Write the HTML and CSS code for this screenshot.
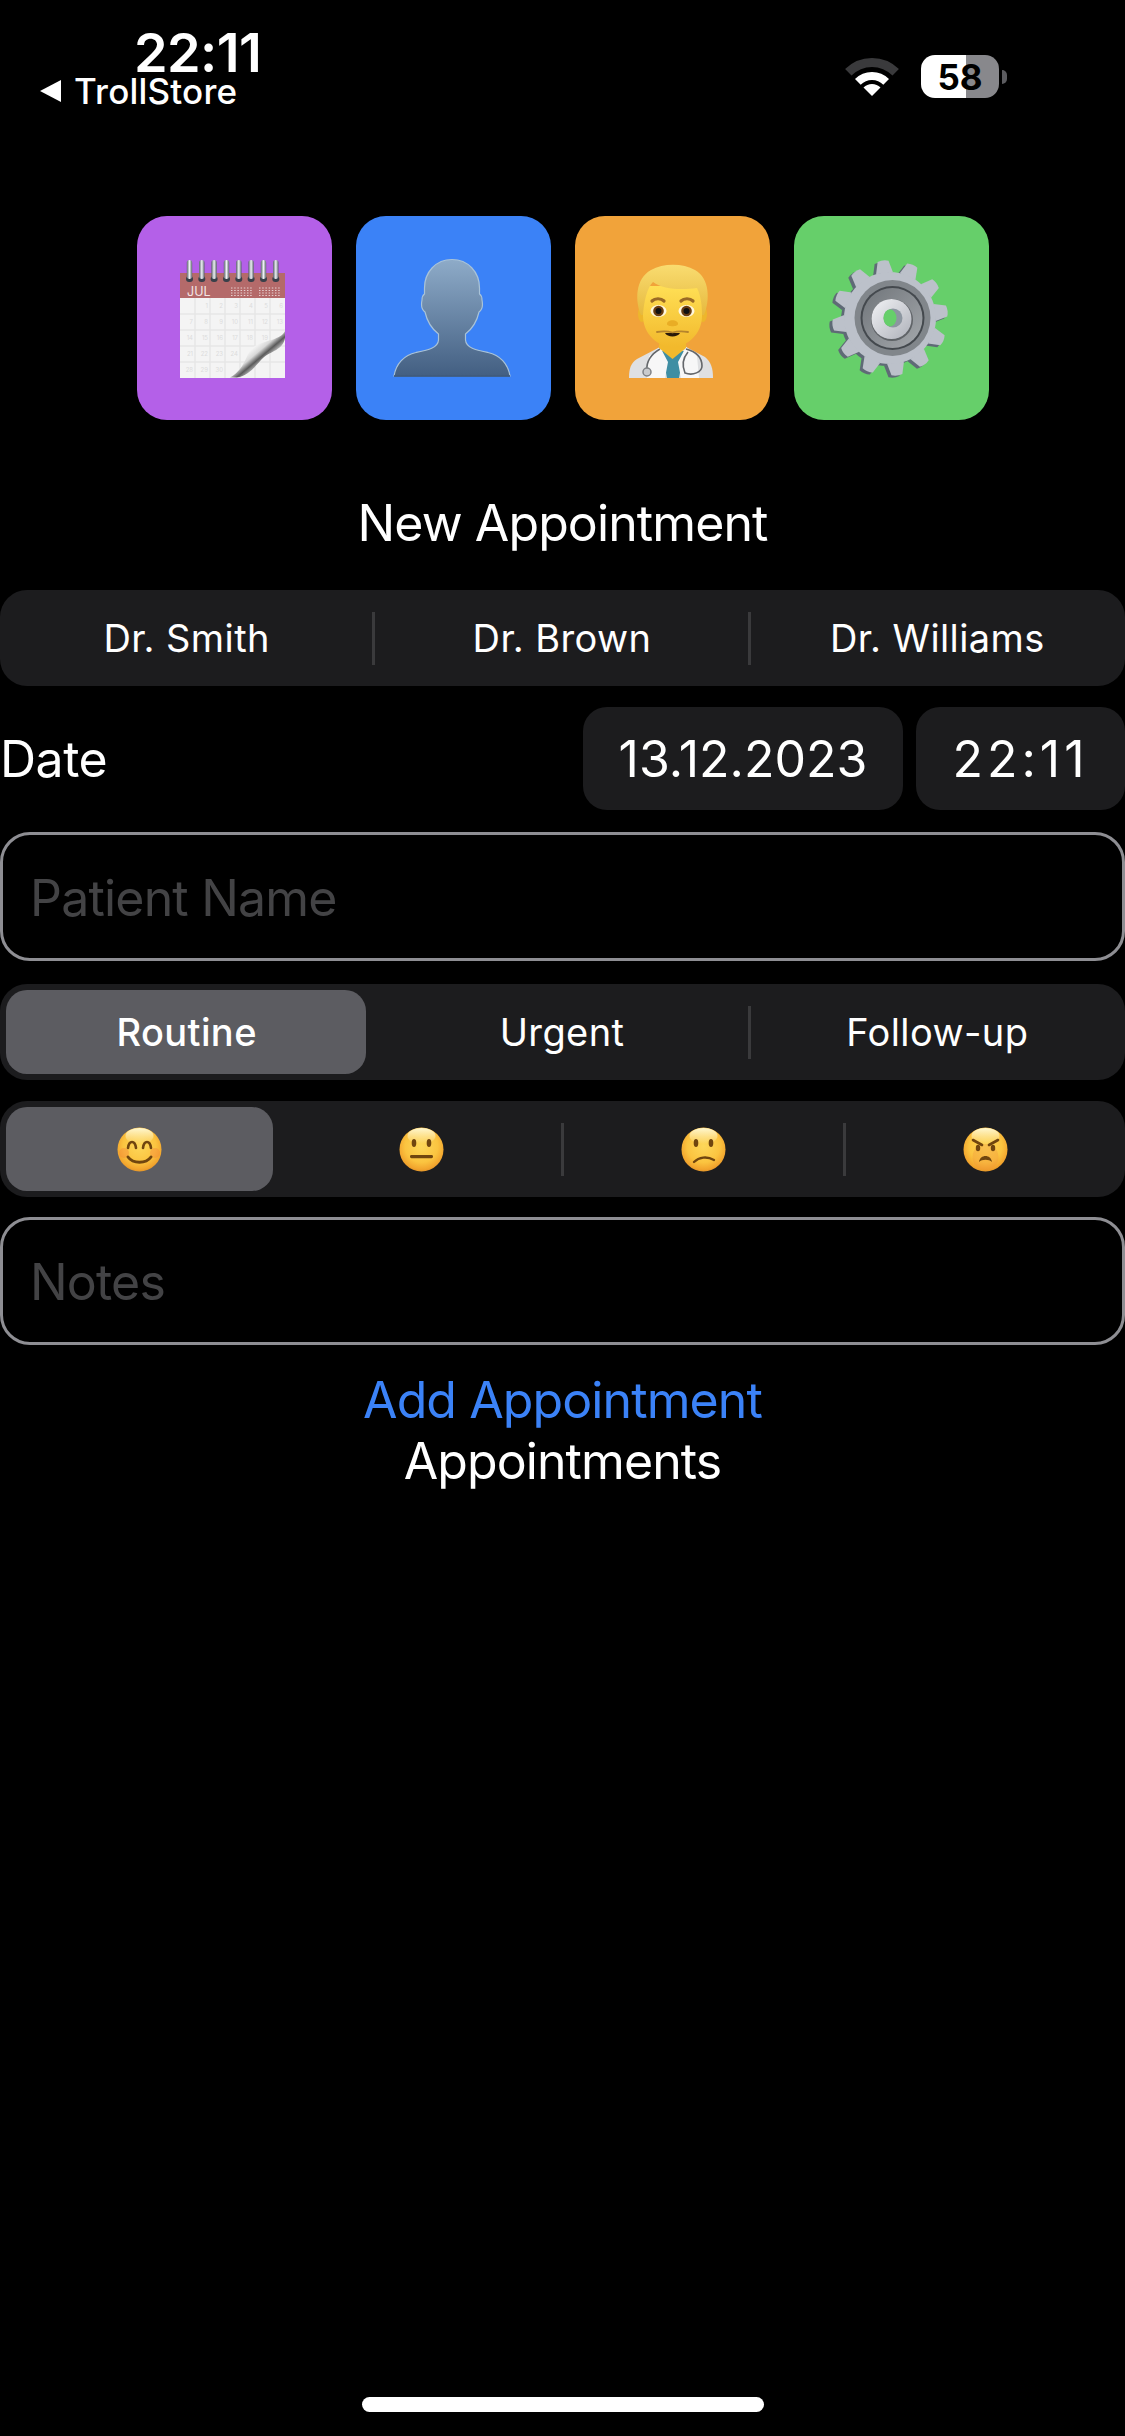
FILE: index.html
```html
<!DOCTYPE html>
<html lang="en">
<head>
  <meta charset="UTF-8" />
  <title>New Appointment</title>
  <meta name="viewport" content="width=device-width, initial-scale=1.0" />
  <link rel="stylesheet" href="styles.css">
</head>
<body>
  <svg class="defs" width="0" height="0">
    <defs>
      <radialGradient id="faceGrad" cx="0.5" cy="0.42" r="0.62">
        <stop offset="0" stop-color="#fdd75a" />
        <stop offset="0.6" stop-color="#fbc440" />
        <stop offset="0.85" stop-color="#f2a52e" />
        <stop offset="1" stop-color="#d98a25" />
      </radialGradient>
      <linearGradient id="faceShine" x1="0" y1="0" x2="0" y2="1">
        <stop offset="0" stop-color="#fffbd8" stop-opacity=".95" />
        <stop offset="1" stop-color="#fffbd8" stop-opacity="0" />
      </linearGradient>
      <linearGradient id="personGrad" x1="0" y1="0" x2="0" y2="1">
        <stop offset="0" stop-color="#8eabc8" />
        <stop offset="1" stop-color="#435f82" />
      </linearGradient>
      <linearGradient id="curlGrad" x1="0" y1="0" x2="1" y2="1">
        <stop offset="0.38" stop-color="#f8f8f8" />
        <stop offset="0.48" stop-color="#d8d8d8" />
        <stop offset="0.56" stop-color="#5a5a5a" />
        <stop offset="0.62" stop-color="#aaaaaa" />
      </linearGradient>
      <linearGradient id="ringGrad" x1="0" y1="0" x2="1" y2="0">
        <stop offset="0" stop-color="#59616b" />
        <stop offset="0.5" stop-color="#eef1f4" />
        <stop offset="1" stop-color="#59616b" />
      </linearGradient>
      <linearGradient id="hairGrad" x1="0" y1="0" x2="0" y2="1">
        <stop offset="0" stop-color="#f9dc70" />
        <stop offset="1" stop-color="#e6b93e" />
      </linearGradient>
      <linearGradient id="skinGrad" x1="0" y1="0" x2="0" y2="1">
        <stop offset="0" stop-color="#ffdf55" />
        <stop offset="1" stop-color="#f2b92c" />
      </linearGradient>
      <linearGradient id="hubGrad" x1="0" y1="0" x2="1" y2="1">
        <stop offset="0" stop-color="#f2f3f6" />
        <stop offset="1" stop-color="#aeb1b9" />
      </linearGradient>
      <linearGradient id="dishGrad" x1="0" y1="0" x2="1" y2="1">
        <stop offset="0" stop-color="#70757a" />
        <stop offset="1" stop-color="#a4a8ac" />
      </linearGradient>
      <g id="gearTeeth">
        <path id="tooth" d="M141 93.500L153 96.500Q155 102 153 107.500L141 110.500Z" transform="rotate(-7 96 102)" />
        <use href="#tooth" transform="rotate(30 96 102)" />
        <use href="#tooth" transform="rotate(60 96 102)" />
        <use href="#tooth" transform="rotate(90 96 102)" />
        <use href="#tooth" transform="rotate(120 96 102)" />
        <use href="#tooth" transform="rotate(150 96 102)" />
        <use href="#tooth" transform="rotate(180 96 102)" />
        <use href="#tooth" transform="rotate(210 96 102)" />
        <use href="#tooth" transform="rotate(240 96 102)" />
        <use href="#tooth" transform="rotate(270 96 102)" />
        <use href="#tooth" transform="rotate(300 96 102)" />
        <use href="#tooth" transform="rotate(330 96 102)" />
        <circle cx="96" cy="102" r="46" />
      </g>
    </defs>
  </svg>

  <div class="page">
    <div class="status">
      <div class="status-left">
        <div class="clock">22:11</div>
        <div class="back-app"><span class="back-arrow"></span>TrollStore</div>
      </div>
      <div class="status-right">
        <svg class="wifi" viewBox="0 0 52 39" width="52" height="39">
          <path fill="#3a3a3c" d="M26 1A38 38 0 0 1 52.900 12.100L46.500 18.500A29 29 0 0 0 5.500 18.500L-.9 12.100A38 38 0 0 1 26 1Z" />
          <path fill="#fff" d="M26 15A24 24 0 0 1 43 22L37.300 27.700A16 16 0 0 0 14.700 27.700L9 22A24 24 0 0 1 26 15Z" />
          <path fill="#fff" d="M26 39L17.500 30.500A12 12 0 0 1 34.500 30.500Z" />
        </svg>
        <div class="battery"><span class="battery-level">58</span></div>
        <div class="battery-nub"></div>
      </div>
    </div>

    <div class="tiles">
      <div class="tile tile-purple">
        <svg viewBox="0 0 195 204" width="195" height="204">
          <rect x="43" y="57" width="105" height="25" fill="#b46a6a" />
          <text x="50" y="80" class="cal-month">JUL</text>
          <path fill="none" stroke="#e6cfcf" stroke-width="1" stroke-dasharray="1.500 1.700" d="M94 72H116M94 74.500H116M94 77H116M94 79.500H116M122 72H144M122 74.500H144M122 77H144M122 79.500H144" />
          <rect x="43" y="82" width="105" height="80" fill="#f4f4f4" />
          <g stroke="#e6e6e6" stroke-width="1.500">
            <path d="M58 82V162M73 82V162M88 82V162M103 82V162M118 82V162M133 82V162" />
            <path d="M43 98H148M43 114H148M43 130H148M43 146H148" />
          </g>
          <g class="cal-days">
            <text x="71" y="92">1</text><text x="86" y="92">2</text><text x="101" y="92">3</text><text x="116" y="92">4</text><text x="131" y="92">5</text><text x="146" y="92">6</text>
            <text x="56" y="108">7</text><text x="71" y="108">8</text><text x="86" y="108">9</text><text x="101" y="108">10</text><text x="116" y="108">11</text><text x="131" y="108">12</text><text x="146" y="108">13</text>
            <text x="56" y="124">14</text><text x="71" y="124">15</text><text x="86" y="124">16</text><text x="101" y="124">17</text><text x="116" y="124">18</text><text x="131" y="124">19</text>
            <text x="56" y="140">21</text><text x="71" y="140">22</text><text x="86" y="140">23</text><text x="101" y="140">24</text>
            <text x="56" y="156">28</text><text x="71" y="156">29</text><text x="86" y="156">30</text>
          </g>
          <path fill="url(#curlGrad)" d="M148 115C144 124 128 124 118 130C108 136 110 152 93 161.500L100 161.500C112 160 120 148 126 142C134 135 146 134 148 122Z" />
          <g fill="#39404a">
            <rect x="49" y="60" width="7" height="6" rx="3" />
            <rect x="61.300" y="60" width="7" height="6" rx="3" />
            <rect x="73.600" y="60" width="7" height="6" rx="3" />
            <rect x="86" y="60" width="7" height="6" rx="3" />
            <rect x="98.300" y="60" width="7" height="6" rx="3" />
            <rect x="110.600" y="60" width="7" height="6" rx="3" />
            <rect x="123" y="60" width="7" height="6" rx="3" />
            <rect x="135.300" y="60" width="7" height="6" rx="3" />
          </g>
          <g fill="url(#ringGrad)">
            <rect x="49.800" y="44" width="5.400" height="19" rx="2.700" />
            <rect x="62.100" y="44" width="5.400" height="19" rx="2.700" />
            <rect x="74.400" y="44" width="5.400" height="19" rx="2.700" />
            <rect x="86.800" y="44" width="5.400" height="19" rx="2.700" />
            <rect x="99.100" y="44" width="5.400" height="19" rx="2.700" />
            <rect x="111.400" y="44" width="5.400" height="19" rx="2.700" />
            <rect x="123.800" y="44" width="5.400" height="19" rx="2.700" />
            <rect x="136.100" y="44" width="5.400" height="19" rx="2.700" />
          </g>
        </svg>
      </div>

      <div class="tile tile-blue">
        <svg viewBox="0 0 195 204" width="195" height="204">
          <path fill="url(#personGrad)" stroke="#a9c3d8" stroke-width="1.200" d="M38 160C40 148 48 139 60 136.500C72 134 82 132 82.500 124L82.500 118C76 113 71 105 69 96C66 94 65 89 66 84C66 81 67 79 68.500 78L68.500 72C68.500 56 80 43.500 96 43.500C112 43.500 123.500 56 123.500 72L123.500 78C125 79 126 81 126 84C127 89 126 94 123 96C121 105 116 113 109.500 118L109.500 124C110 132 120 134 132 136.500C144 139 152 148 154 160Z" />
          <path fill="none" stroke="#2f4a6c" stroke-width="1.500" d="M38 160H154" />
        </svg>
      </div>

      <div class="tile tile-orange">
        <svg viewBox="0 0 195 204" width="195" height="204">
          <path fill="#dfe0e2" d="M54 162C54 152 56 147 62 143L85 131H111L130 141C136 146 138 152 138 162Z" />
          <path fill="#3f8ea3" d="M87 135H109L104 162H92Z" />
          <path fill="#f7f7f7" d="M85 131L93 146L90 162H72L74 140Z" />
          <path fill="#f7f7f7" d="M111 131L103 146L106 162H124L122 140Z" />
          <path fill="none" stroke="#64676b" stroke-width="1.600" d="M85 133C76 138 71 146 72 154M111 133C122 136 127 142 127 150C127 156 118 160 110 157C107 150 108 142 113 136" />
          <circle cx="72" cy="156" r="4" fill="#c9cbce" stroke="#7e8185" stroke-width="1.500" />
          <path fill="#f2b92c" d="M84 122H111V132L97.500 143L84 132Z" />
          <ellipse cx="67" cy="98" rx="4" ry="8" fill="#edb62c" />
          <ellipse cx="128" cy="98" rx="4" ry="8" fill="#edb62c" />
          <path fill="url(#skinGrad)" d="M68 70H127V100C127 118 112 131 97.500 131C83 131 68 118 68 100Z" />
          <path fill="url(#hairGrad)" d="M66 99C60 85 60 63 76 54C88 47 108 47 120 54C135 62 135 85 129 99L127 99C127 90 126 80 122 72C108 74 88 74 78 66C72 72 69 85 68 99Z" />
          <path fill="none" stroke="#9a6a25" stroke-width="3.200" stroke-linecap="round" d="M77 85C80 82 86 82 89 85M106 85C109 82 115 82 118 85" />
          <ellipse cx="83.500" cy="95" rx="8" ry="6" fill="#fff6dc" />
          <ellipse cx="111.500" cy="95" rx="8" ry="6" fill="#fff6dc" />
          <circle cx="83.500" cy="95" r="5.300" fill="#6a3d12" />
          <circle cx="111.500" cy="95" r="5.300" fill="#6a3d12" />
          <circle cx="83.500" cy="95" r="3" fill="#111" />
          <circle cx="111.500" cy="95" r="3" fill="#111" />
          <path fill="#e9ad25" d="M92 108C92 103 103 103 103 108C103 111 92 111 92 108Z" />
          <path fill="#2a1a0a" d="M90 117H105C103 121.500 92 121.500 90 117Z" />
          <path fill="none" stroke="#b5842c" stroke-width="1.800" stroke-linecap="round" d="M82 116C88 115 92 115 97.500 116.500C103 115 107 115 113 116" />
        </svg>
      </div>

      <div class="tile tile-green">
        <svg viewBox="0 0 195 204" width="195" height="204">
          <use href="#gearTeeth" fill="#5f6a76" transform="translate(-3 2)" />
          <use href="#gearTeeth" fill="#bcc1ca" />
          <circle cx="98.500" cy="102" r="38" fill="#81868b" />
          <circle cx="98.500" cy="102" r="32" fill="#44494e" />
          <circle cx="98.500" cy="102" r="30" fill="url(#dishGrad)" />
          <circle cx="98" cy="104" r="21" fill="#5f6367" />
          <circle cx="97.500" cy="103" r="20" fill="url(#hubGrad)" />
          <circle cx="99" cy="102" r="9.500" fill="#8c96a0" />
          <ellipse cx="96" cy="102" rx="6.500" ry="8.500" fill="#66cf6a" />
        </svg>
      </div>
    </div>

    <h2 class="title">New Appointment</h2>

    <div class="seg seg-doctors">
      <div class="seg-item"><span class="seg-label">Dr. Smith</span></div>
      <div class="seg-sep"></div>
      <div class="seg-item"><span class="seg-label">Dr. Brown</span></div>
      <div class="seg-sep"></div>
      <div class="seg-item"><span class="seg-label">Dr. Williams</span></div>
    </div>

    <div class="date-row">
      <div class="date-label">Date</div>
      <div class="pill pill-date">13.12.2023</div>
      <div class="pill pill-time">22:11</div>
    </div>

    <div class="field field-name">Patient Name</div>

    <div class="seg seg-type">
      <div class="seg-item"><span class="seg-label selected">Routine</span></div>
      <div class="seg-sep off"></div>
      <div class="seg-item"><span class="seg-label">Urgent</span></div>
      <div class="seg-sep"></div>
      <div class="seg-item"><span class="seg-label">Follow-up</span></div>
    </div>

    <div class="seg seg-mood">
      <div class="seg-item"><span class="seg-label selected">
        <svg class="emoji" viewBox="0 0 45 45" width="45" height="45">
          <circle cx="22.500" cy="22.500" r="22" fill="url(#faceGrad)" />
          <ellipse cx="22.500" cy="9" rx="14" ry="8" fill="url(#faceShine)" />
          <circle cx="7" cy="26" r="5" fill="#f58a3c" opacity=".45" />
          <circle cx="38" cy="26" r="5" fill="#f58a3c" opacity=".45" />
          <path fill="none" stroke="#70450f" stroke-width="2.600" stroke-linecap="round" d="M11 21C12 13 18 13 19 21M26 21C27 13 33 13 34 21" />
          <path fill="none" stroke="#70450f" stroke-width="3" stroke-linecap="round" d="M11 30C16 37 29 37 34 30" />
        </svg>
      </span></div>
      <div class="seg-sep off"></div>
      <div class="seg-item"><span class="seg-label">
        <svg class="emoji" viewBox="0 0 45 45" width="45" height="45">
          <circle cx="22.500" cy="22.500" r="22" fill="url(#faceGrad)" />
          <ellipse cx="22.500" cy="9" rx="14" ry="8" fill="url(#faceShine)" />
          <ellipse cx="15" cy="16" rx="2.300" ry="4" fill="#70450f" />
          <ellipse cx="30" cy="16" rx="2.300" ry="4" fill="#70450f" />
          <rect x="11" y="28" width="23" height="3.200" rx="1.400" fill="#70450f" />
        </svg>
      </span></div>
      <div class="seg-sep"></div>
      <div class="seg-item"><span class="seg-label">
        <svg class="emoji" viewBox="0 0 45 45" width="45" height="45">
          <circle cx="22.500" cy="22.500" r="22" fill="url(#faceGrad)" />
          <ellipse cx="22.500" cy="9" rx="14" ry="8" fill="url(#faceShine)" />
          <ellipse cx="15" cy="16" rx="2.300" ry="4" fill="#70450f" />
          <ellipse cx="30" cy="16" rx="2.300" ry="4" fill="#70450f" />
          <path fill="none" stroke="#70450f" stroke-width="2.400" stroke-linecap="round" d="M13 35C18 30 26 29 33 33" />
        </svg>
      </span></div>
      <div class="seg-sep"></div>
      <div class="seg-item"><span class="seg-label">
        <svg class="emoji" viewBox="0 0 45 45" width="45" height="45">
          <circle cx="22.500" cy="22.500" r="22" fill="url(#faceGrad)" />
          <ellipse cx="22.500" cy="9" rx="14" ry="8" fill="url(#faceShine)" />
          <circle cx="22.500" cy="30" r="13" fill="#ef8f3a" opacity=".3" />
          <path fill="none" stroke="#70450f" stroke-width="2.600" stroke-linecap="round" d="M10 13L19 18M35 13L26 18" />
          <ellipse cx="15" cy="21" rx="2.200" ry="3.200" fill="#70450f" />
          <ellipse cx="30" cy="21" rx="2.200" ry="3.200" fill="#70450f" />
          <path fill="#70450f" d="M16 35C17 27 28 27 29 35C26 32 19 32 16 35Z" />
        </svg>
      </span></div>
    </div>

    <div class="field field-notes">Notes</div>

    <div class="add-link">Add Appointment</div>
    <div class="list-title">Appointments</div>

    <div class="home-bar"></div>
  </div>
</body>
</html>
```

FILE: styles.css
```css
* {
  box-sizing: border-box;
}

body {
  margin: 0;
  background-color: #000;
  color: #fff;
  font-family: Inter, "Noto Sans", sans-serif;
}

.defs {
  position: absolute;
}

.page {
  display: flex;
  flex-direction: column;
  height: 2436px;
  width: 1125px;
  overflow: hidden;
}

/* status bar */
.status {
  display: flex;
  justify-content: space-between;
  height: 216px;
  padding-right: 118px;
}

.status-left {
  padding-top: 31px;
}

.clock {
  margin-left: 134px;
  font-size: 54px;
  line-height: 44px;
  font-weight: 600;
  letter-spacing: -0.6px;
}

.back-app {
  display: flex;
  align-items: center;
  margin-left: 40px;
  margin-top: 1px;
  font-size: 35px;
  line-height: 30px;
  font-weight: 500;
  letter-spacing: 0.2px;
}

.back-arrow {
  width: 0;
  height: 0;
  margin-right: 13px;
  border-top: 11px solid transparent;
  border-bottom: 11px solid transparent;
  border-right: 21px solid #fff;
}

.status-right {
  display: flex;
  align-items: flex-start;
  padding-top: 55px;
}

.wifi {
  margin-top: 2px;
  margin-right: 23px;
  overflow: visible;
}

.battery {
  display: flex;
  align-items: center;
  justify-content: center;
  width: 78px;
  height: 43px;
  border-radius: 14px;
  background: linear-gradient(to right, #fff 45px, #88888c 45px);
  color: #000;
}

.battery-level {
  font-size: 35px;
  font-weight: 700;
}

.battery-nub {
  width: 5px;
  height: 14px;
  margin-top: 15px;
  margin-left: 3px;
  border-radius: 0 7px 7px 0;
  background-color: #5c5c60;
}

/* top tiles */
.tiles {
  display: flex;
  justify-content: center;
  gap: 24px;
  padding-left: 1px;
}

.tile {
  width: 195px;
  height: 204px;
  border-radius: 30px;
}

.tile svg {
  display: block;
}

.tile-purple {
  background-color: #b460e8;
}

.tile-blue {
  background-color: #3b82f7;
}

.tile-orange {
  background-color: #f1a33a;
}

.tile-green {
  background-color: #66cf6a;
}

.cal-month {
  font-size: 12.500px;
  fill: #f3e4e4;
}

.cal-days text {
  font-size: 6px;
  fill: #dcdcdc;
  text-anchor: end;
}

.title {
  margin: 72px 0 35px;
  font-size: 50px;
  line-height: 63px;
  font-weight: 400;
  text-align: center;
  letter-spacing: -0.9px;
}

/* segmented controls */
.seg {
  display: flex;
  align-items: center;
  height: 96px;
  border-radius: 27px;
  background-color: #1c1c1e;
}

.seg-doctors,
.seg-type {
  padding-right: 2px;
}

.seg-item {
  flex: 1 1 0;
  display: flex;
  height: 100%;
  padding: 6px;
}

.seg-label {
  flex: 1;
  display: flex;
  align-items: center;
  justify-content: center;
  border-radius: 21px;
  font-size: 38px;
  letter-spacing: 0.4px;
}

.seg-doctors .seg-label,
.seg-type .seg-label {
  padding-left: 1px;
}

.seg-label.selected {
  background-color: #5c5c61;
  font-weight: 500;
}

.seg-sep {
  flex: none;
  width: 3px;
  height: 53px;
  background-color: #3a3a3c;
}

.seg-sep.off {
  background-color: transparent;
}

.seg-type {
  margin-top: 23px;
}

.seg-mood {
  margin-top: 21px;
}

.emoji {
  display: block;
}

/* date row */
.date-row {
  display: flex;
  align-items: center;
  gap: 13px;
  margin-top: 21px;
}

.date-label {
  margin-right: auto;
  font-size: 50px;
  letter-spacing: -0.5px;
}

.pill {
  display: flex;
  align-items: center;
  justify-content: center;
  height: 103px;
  border-radius: 24px;
  background-color: #1c1c1e;
  font-size: 50px;
}

.pill-date {
  width: 320px;
}

.pill-time {
  width: 209px;
  letter-spacing: 4px;
}

/* text fields */
.field {
  display: flex;
  align-items: center;
  padding-left: 27px;
  padding-top: 2px;
  border: 3px solid #8e8e93;
  border-radius: 30px;
  color: #434345;
  font-size: 50px;
  letter-spacing: -0.8px;
}

.field-name {
  height: 129px;
  margin-top: 22px;
}

.field-notes {
  height: 128px;
  margin-top: 20px;
}

.add-link,
.list-title {
  font-size: 50px;
  line-height: 61px;
  text-align: center;
  letter-spacing: -0.9px;
}

.add-link {
  margin-top: 25px;
  color: #3b82f7;
}

.home-bar {
  width: 402px;
  height: 15px;
  margin: auto auto 24px;
  border-radius: 8px;
  background-color: #fff;
}
```
